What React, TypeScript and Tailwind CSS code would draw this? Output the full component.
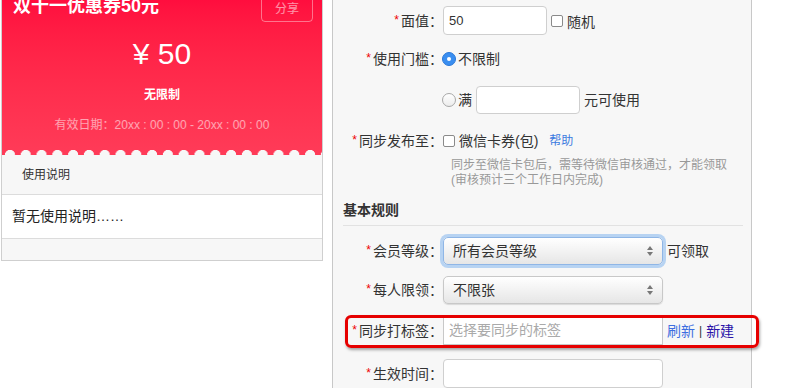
import React from "react";

const Star = () => (
  <span className="text-[#e00] text-[12px] leading-none relative -top-[2px] mr-[2px]">*</span>
);

function Label({ text }: { text: string }) {
  return (
    <div className="w-[110px] shrink-0 text-right text-[14px] leading-[20px] text-[#333] whitespace-nowrap">
      <Star />
      {text}：
    </div>
  );
}

function Arrows() {
  return (
    <svg width="8" height="12" viewBox="0 0 8 12" className="shrink-0">
      <path d="M4 1 L7 5 L1 5 Z" fill="#777" />
      <path d="M4 11 L7 7 L1 7 Z" fill="#777" />
    </svg>
  );
}

function Select({ value, focused }: { value: string; focused?: boolean }) {
  return (
    <div
      className={
        "w-[220px] h-[28px] rounded-[5px] border flex items-center justify-between pl-[9px] pr-[8px] bg-gradient-to-b from-[#ffffff] to-[#e6e6e6] text-[14px] text-[#333] " +
        (focused
          ? "border-[#8fb6e6] shadow-[0_0_0_3px_#b7d3f2]"
          : "border-[#c8c8c8] shadow-[0_1px_1px_rgba(0,0,0,0.12)]")
      }
    >
      <span className="leading-[20px]">{value}</span>
      <Arrows />
    </div>
  );
}

export default function App() {
  return (
    <div
      className="w-[803px] h-[388px] overflow-hidden bg-white flex items-start"
      style={{ fontFamily: '"Liberation Sans", "Noto Sans CJK SC", sans-serif' }}
    >
      {/* Left coupon card */}
      <div className="ml-[1px] w-[322px] border border-t-0 border-[#cfcfcf] shrink-0 flex flex-col">
        <div className="relative h-[155px] bg-gradient-to-b from-[#ff0d3e] to-[#ff3b58] flex flex-col items-center text-white overflow-hidden">
          <div className="w-full flex justify-between items-start h-[22px] pl-[11px] pr-[9px]">
            <div className="-mt-[5px] text-[18px] leading-[22px] font-bold">双十一优惠券50元</div>
            <div className="-mt-[6px] h-[28px] w-[52px] rounded-[4px] border border-white/40 flex items-center justify-center pt-[2px] text-[12px] text-white/55">
              分享
            </div>
          </div>
          <div className="mt-[15px] text-[30px] leading-[34px]">¥ 50</div>
          <div className="mt-[16px] text-[12px] leading-[16px] font-bold">无限制</div>
          <div className="mt-[14px] text-[12px] leading-[16px] text-white/55">
            有效日期：20xx : 00 : 00 - 20xx : 00 : 00
          </div>
          <div className="absolute left-0 right-0 bottom-0 h-[5px] bg-[radial-gradient(circle_at_8px_5px,#f7f7f7_4.8px,transparent_5.4px)] bg-[length:15.8px_5px] bg-repeat-x" />
        </div>
        <div className="h-[40px] bg-[#f7f7f7] border-b border-[#dcdcdc] flex items-center pl-[20px] text-[12px] text-[#333]">
          使用说明
        </div>
        <div className="h-[44px] bg-white border-b border-[#dcdcdc] flex items-center pl-[10px] text-[14px] text-[#222]">
          暂无使用说明……
        </div>
        <div className="h-[21px] bg-[#f7f7f7]" />
      </div>

      {/* Right form panel */}
      <div className="ml-[9px] w-[420px] h-[388px] shrink-0 bg-[#f7f7f7] border-l border-r border-[#c8c8c8] flex flex-col">
        {/* 面值 */}
        <div className="mt-[6px] h-[29px] flex items-center">
          <Label text="面值" />
          <div className="w-[104px] h-[29px] bg-white border border-[#cfcfcf] rounded-[4px] flex items-center pl-[5px] text-[13px] text-[#333]">
            50
          </div>
          <div className="ml-[4px] w-[12px] h-[12px] border border-[#8a8a8a] rounded-[2px] bg-white" />
          <span className="ml-[4px] text-[14px] leading-[20px] text-[#333] mt-[3px]">随机</span>
        </div>

        {/* 使用门槛 */}
        <div className="mt-[11px] h-[28px] flex items-center">
          <Label text="使用门槛" />
          <div className="-ml-[1px] w-[14px] h-[14px] rounded-full bg-[#3a8ef0] border border-[#2a78d8] flex items-center justify-center">
            <div className="w-[4px] h-[4px] rounded-full bg-white" />
          </div>
          <span className="ml-[2px] text-[14px] leading-[20px] text-[#333]">不限制</span>
        </div>

        {/* 满 */}
        <div className="mt-[13px] h-[28px] flex items-center">
          <div className="w-[110px] shrink-0" />
          <div className="-ml-[1px] w-[14px] h-[14px] rounded-full border border-[#a8a8a8] bg-gradient-to-b from-white to-[#ececec]" />
          <span className="ml-[2px] text-[14px] leading-[20px] text-[#333]">满</span>
          <div className="ml-[4px] w-[104px] h-[28px] bg-white border border-[#cfcfcf] rounded-[4px]" />
          <span className="ml-[4px] text-[14px] leading-[20px] text-[#333]">元可使用</span>
        </div>

        {/* 同步发布至 */}
        <div className="mt-[17px] h-[20px] flex items-center">
          <Label text="同步发布至" />
          <div className="w-[12px] h-[12px] border border-[#8a8a8a] rounded-[2px] bg-white" />
          <span className="ml-[4px] text-[14px] leading-[20px] text-[#333]">微信卡券(包)</span>
          <span className="ml-[11px] text-[12px] leading-[20px] text-[#3c7be0]">帮助</span>
        </div>
        <div className="mt-[7px] pl-[118px] text-[12px] leading-[15px] text-[#999]">
          <div>同步至微信卡包后，需等待微信审核通过，才能领取</div>
          <div>(审核预计三个工作日内完成)</div>
        </div>

        {/* 基本规则 */}
        <div className="mt-[12px] ml-[10px] mr-[8px] h-[27px] border-b border-[#e2e2e2] text-[14px] leading-[20px] font-bold text-[#333]">
          基本规则
        </div>

        {/* 会员等级 */}
        <div className="mt-[11px] h-[28px] flex items-center">
          <Label text="会员等级" />
          <Select value="所有会员等级" focused />
          <span className="ml-[4px] text-[14px] leading-[20px] text-[#333]">可领取</span>
        </div>

        {/* 每人限领 */}
        <div className="mt-[11px] h-[28px] flex items-center">
          <Label text="每人限领" />
          <Select value="不限张" />
        </div>

        {/* 同步打标签 */}
        <div className="relative mt-[12px] h-[29px] flex items-center">
          <Label text="同步打标签" />
          <div className="w-[220px] h-[29px] bg-white border border-[#c8c8c8] flex items-center pl-[5px] text-[14px] text-[#aaa]">
            选择要同步的标签
          </div>
          <span className="ml-[4px] text-[14px] leading-[20px] text-[#3d6ee0]">刷新</span>
          <span className="mx-[4px] text-[12px] leading-[20px] text-[#333]">|</span>
          <span className="text-[14px] leading-[20px] text-[#2a12a8]">新建</span>
          <div className="absolute left-[12px] top-[-1px] w-[414px] h-[33px] border-[3px] border-[#e60000] rounded-[6px] shadow-[1px_2px_3px_rgba(0,0,0,0.35)] pointer-events-none" />
        </div>

        {/* 生效时间 */}
        <div className="mt-[14px] h-[29px] flex items-center">
          <Label text="生效时间" />
          <div className="w-[220px] h-[29px] bg-white border border-[#cfcfcf] rounded-[4px]" />
        </div>
      </div>
    </div>
  );
}
